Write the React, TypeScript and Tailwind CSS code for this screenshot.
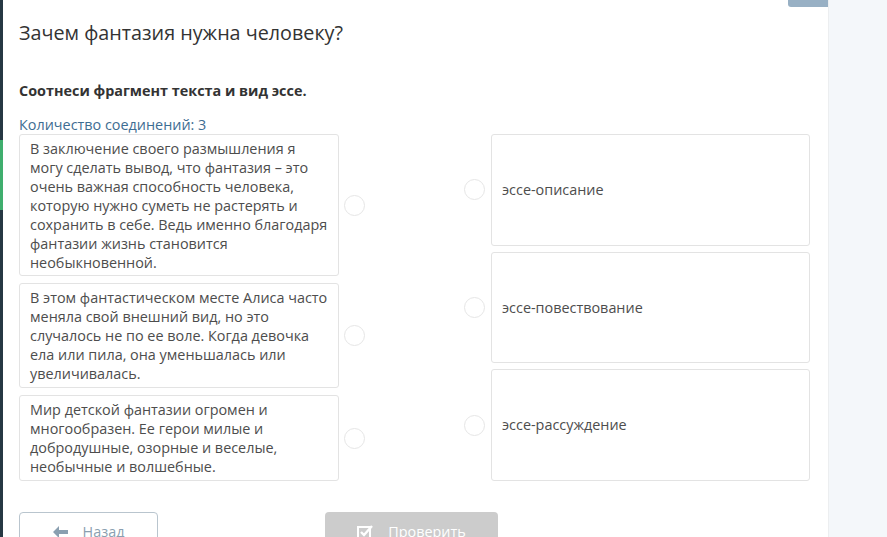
import React from "react";

const left = [
  "В заключение своего размышления я могу сделать вывод, что фантазия – это очень важная способность человека, которую нужно суметь не растерять и сохранить в себе. Ведь именно благодаря фантазии жизнь становится необыкновенной.",
  "В этом фантастическом месте Алиса часто меняла свой внешний вид, но это случалось не по ее воле. Когда девочка ела или пила, она уменьшалась или увеличивалась.",
  "Мир детской фантазии огромен и многообразен. Ее герои милые и добродушные, озорные и веселые, необычные и волшебные.",
];
const right = ["эссе-описание", "эссе-повествование", "эссе-рассуждение"];

function Circle() {
  return <div className="w-[21px] h-[21px] rounded-full border-[1.5px] border-[#e6e6e6] bg-white shrink-0" />;
}

export default function App() {
  return (
    <div className="w-[887px] h-[537px] overflow-hidden flex bg-[#f4f7fa] relative" style={{ fontFamily: '"Open Sans", sans-serif' }}>
      <div className="w-[3px] h-full bg-[#263843] flex flex-col shrink-0">
        <div className="h-[140px]" />
        <div className="h-[70px] bg-[#3fae6e]" />
      </div>
      <div className="w-[826px] h-full bg-white border-r border-[#eceef0] pl-[16px] pr-[18px] relative shrink-0">
        <div className="absolute top-0 right-0 w-[40px] h-[7px] bg-[#98b0c4] rounded-bl-[3px]" />
        <h1 className="text-[19.75px] leading-[28px] text-[#333] pt-[19px]">Зачем фантазия нужна человеку?</h1>
        <p className="text-[14.4px] leading-[20px] font-bold text-[#333] mt-[34px]">Соотнеси фрагмент текста и вид эссе.</p>
        <p className="text-[14.4px] leading-[20px] text-[#3e6d92] mt-[14px]">Количество соединений: 3</p>
        <div className="flex mt-[-1px]">
          <div className="flex flex-col gap-[7px] w-[320px]">
            {left.map((t, i) => (
              <div key={i} className={"relative border border-[#e3e3e3] rounded-[3px] px-[10px] pt-[4px] text-[14.4px] leading-[19px] text-[#4d4d4d] " + (i === 0 ? "pb-[3px]" : "pb-[4px]")}>
                {t}
              </div>
            ))}
          </div>
          <div className="flex flex-col gap-[7px] w-[32px] pl-[5px]">
            {left.map((_, i) => (
              <div key={i} className={"flex items-center " + (i === 0 ? "h-[142px]" : i === 1 ? "h-[105px]" : "h-[86px]")}>
                <Circle />
              </div>
            ))}
          </div>
          <div className="flex flex-col gap-[6px] flex-1">
            {right.map((t, i) => (
              <div key={i} className="flex-1 flex items-center">
                <div className="w-[120px] flex justify-end pr-[6px]">
                  <Circle />
                </div>
                <div className="flex-1 h-full border border-[#e3e3e3] rounded-[3px] flex items-center pl-[10px] text-[14.4px] text-[#4d4d4d]">
                  {t}
                </div>
              </div>
            ))}
          </div>
        </div>
        <div className="flex mt-[31px]">
          <div className="w-[139px] h-[40px] border border-[#b9c5ce] rounded-[4px] flex items-center justify-center gap-[14px] text-[#8a9fb0] text-[14.4px]">
            <svg width="16" height="12" viewBox="0 0 16 12"><path d="M0 6 L6 0 V4 H15 V8 H6 V12 Z" fill="#8a9fb0" /></svg>
            <span>Назад</span>
          </div>
          <div className="ml-[167px] w-[173px] h-[40px] bg-[#cccccc] rounded-[4px] flex items-center justify-center gap-[14px] text-white text-[14.4px]">
            <svg width="17" height="15" viewBox="0 0 17 15"><rect x="1" y="2" width="12" height="12" fill="none" stroke="#fff" strokeWidth="2" /><path d="M4 7 L7 10 L15 1" fill="none" stroke="#fff" strokeWidth="2.4" /></svg>
            <span>Проверить</span>
          </div>
        </div>
      </div>
    </div>
  );
}
